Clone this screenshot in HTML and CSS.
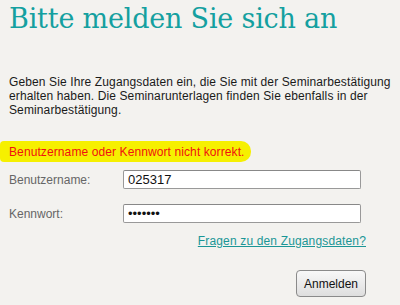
FILE: index.html
```html
<!DOCTYPE html>
<html lang="de">
<head>
    <meta charset="UTF-8">
    <title>Anmeldung</title>
    <link rel="stylesheet" href="styles.css">
</head>
<body>
    <h1>Bitte melden Sie sich an</h1>

    <p class="intro">Geben Sie Ihre Zugangsdaten ein, die Sie mit der Seminarbestätigung erhalten haben. Die Seminarunterlagen finden Sie ebenfalls in der Seminarbestätigung.</p>

    <form class="login">
        <div class="error"><span>Benutzername oder Kennwort nicht korrekt.</span></div>

        <div class="row">
            <label for="user">Benutzername:</label>
            <input id="user" type="text" value="025317">
        </div>
        <div class="row">
            <label for="pass">Kennwort:</label>
            <input id="pass" type="password" value="1234567">
        </div>

        <div class="help"><a href="#">Fragen zu den Zugangsdaten?</a></div>

        <div class="actions"><button type="button">Anmelden</button></div>
    </form>
</body>
</html>
```

FILE: styles.css
```css
body {
    margin: 0;
    padding: 0 2px 0 9px;
    background: #f3f2ef;
    font-family: "Liberation Sans", Arial, sans-serif;
    font-size: 12px;
    color: #1a1a1a;
}

h1 {
    margin: 0;
    padding-top: 2px;
    font-family: "DejaVu Serif", serif;
    font-weight: normal;
    font-size: 27px;
    line-height: 34px;
    color: #14a0a0;
    letter-spacing: -0.2px;
}

.intro {
    margin: 39px 0 0 0;
    line-height: 14px;
    letter-spacing: 0.12px;
}

.login {
    width: 357px;
    margin-top: 24px;
}

.error span {
    display: inline-block;
    margin-left: -9px;
    padding: 4px 6px 3px 9px;
    background: #f6f000;
    border-radius: 4px 10px 10px 4px;
    color: #f01010;
    letter-spacing: 0.1px;
}

.row {
    display: flex;
    align-items: center;
    margin-top: 8px;
}

.row + .row {
    margin-top: 15px;
}

.row label {
    width: 114px;
    color: #666;
}

.row input {
    box-sizing: border-box;
    width: 238px;
    height: 19px;
    padding: 1px 4px;
    border: 1px solid #999;
    border-top-color: #888;
    border-radius: 2px;
    background: #fff;
    font-family: "Liberation Sans", Arial, sans-serif;
    font-size: 13px;
    color: #111;
}

.help {
    margin-top: 11px;
    text-align: right;
}

.help a {
    color: #1a9696;
    letter-spacing: 0.15px;
}

.actions {
    margin-top: 22px;
    text-align: right;
}

.actions button {
    height: 27px;
    padding: 0 7px;
    border: 1px solid #8a8a8a;
    border-radius: 4px;
    background: linear-gradient(#f8f8f8, #dedede);
    font-family: "Liberation Sans", Arial, sans-serif;
    font-size: 12px;
    color: #111;
}
```
